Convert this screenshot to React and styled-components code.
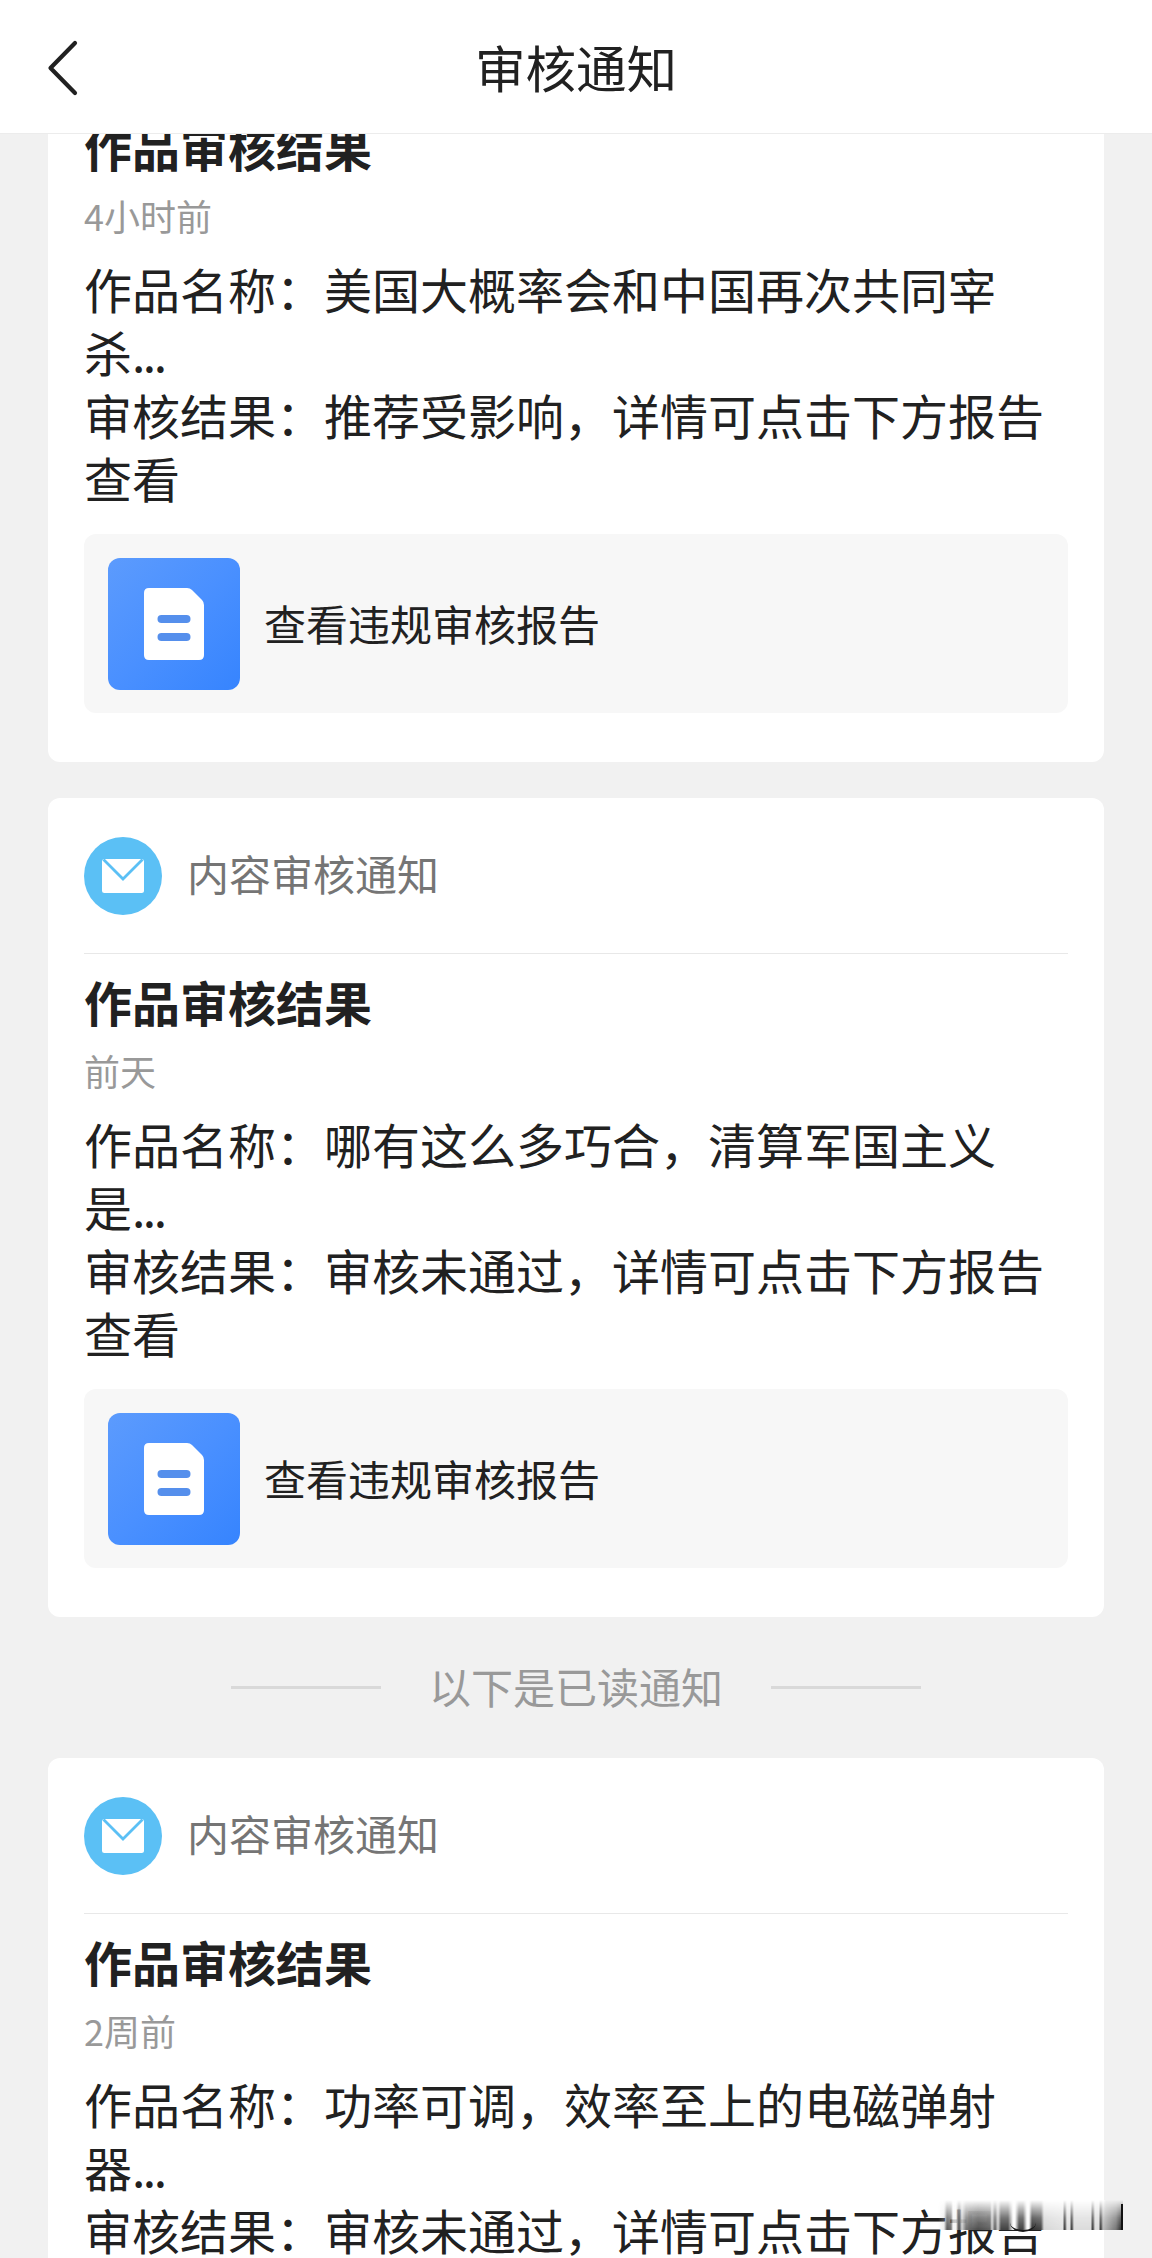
import React from "react";
import styled, { createGlobalStyle } from "styled-components";

const Global = createGlobalStyle`
  *, *::before, *::after { box-sizing: border-box; }
  html, body { margin: 0; padding: 0; background: #f1f1f1; }
  body {
    font-family: "Noto Sans CJK SC", "Noto Sans", sans-serif;
    color: #212121;
    overflow: hidden;
  }
  h1, h2, p { margin: 0; font-weight: 400; }
`;

const Screen = styled.div`
  position: relative;
  display: flex;
  flex-direction: column;
  width: 1152px;
  height: 2258px;
  overflow: hidden;
  background: #f1f1f1;
`;

const NavBar = styled.header`
  display: grid;
  grid-template-columns: 150px 1fr 150px;
  align-items: center;
  flex: none;
  height: 134px;
  background: #fff;
  border-bottom: 1px solid #ececec;
`;

const BackButton = styled.button`
  display: flex;
  padding: 2px 0 0 44px;
  border: 0;
  background: none;
`;

const NavTitle = styled.h1`
  padding-bottom: 1px;
  text-align: center;
  font-size: 50.5px;
  line-height: 64px;
`;

const Feed = styled.main`
  flex: 1;
  min-height: 0;
  overflow: hidden;
  padding: 0 48px;
`;

const FeedList = styled.div`
  display: flex;
  flex-direction: column;
  margin-top: -191px;
`;

const Card = styled.article`
  display: flex;
  flex-direction: column;
  height: 819px;
  margin-bottom: ${(p) => (p.$last ? 0 : 36)}px;
  padding: 0 36px;
  border-radius: 12px;
  background: #fff;
`;

const CardSource = styled.div`
  display: flex;
  align-items: center;
  gap: 25px;
  height: 156px;
  border-bottom: 1px solid #e8e8e8;
  color: #757575;
  font-size: 42px;
  line-height: 60px;
`;

const SourceName = styled.span`
  padding-bottom: 5px;
`;

const CardTitle = styled.h2`
  margin-top: 16px;
  font-size: 48px;
  font-weight: 700;
  line-height: 63px;
`;

const CardTime = styled.p`
  margin-top: 12px;
  color: #999;
  font-size: 36px;
  line-height: 50px;
`;

const CardBody = styled.p`
  margin-top: 17px;
  font-size: 48px;
  line-height: 63px;
  white-space: pre;
`;

const Ellipsis = styled.span`
  letter-spacing: -2.5px;
`;

const ReportLink = styled.div`
  display: flex;
  align-items: center;
  gap: 24px;
  height: 179px;
  margin-top: 25px;
  padding: 0 24px;
  border-radius: 12px;
  background: #f7f7f7;
  font-size: 42px;
  line-height: 60px;
`;

const ReportName = styled.span`
  padding-bottom: 2px;
`;

const ReportBadge = styled.span`
  display: flex;
  align-items: center;
  justify-content: center;
  width: 132px;
  height: 132px;
  border-radius: 12px;
  background: linear-gradient(135deg, #5c9bfd 0%, #4a90ff 50%, #3684fe 100%);
`;

const ReadDivider = styled.div`
  display: flex;
  align-items: center;
  justify-content: center;
  gap: 48px;
  height: 141px;
  margin-top: -36px;
  color: #999;
  font-size: 42px;
  line-height: 60px;
`;

const ReadLabel = styled.span`
  padding-bottom: 3px;
`;

const Rule = styled.i`
  width: 150px;
  height: 3px;
  background: #d9d9d9;
`;

const Smear = styled.div`
  position: absolute;
  left: 938px;
  top: 2200px;
  width: 185px;
  height: 30px;
  background: linear-gradient(90deg, transparent 0, rgba(255, 255, 255, 0.9) 30px, #fff 70px, #fff 165px, transparent 168px);

  &::before {
    content: "";
    position: absolute;
    inset: 0;
    background: linear-gradient(
      90deg,
      rgba(70, 70, 70, 0) 0px,
      rgba(70, 70, 70, 0.1) 6px,
      rgba(50, 50, 50, 0.8) 9px,
      rgba(50, 50, 50, 0.7) 13px,
      rgba(240, 240, 240, 0.7) 15px,
      rgba(240, 240, 240, 0.7) 18px,
      rgba(50, 50, 50, 0.8) 21px,
      rgba(200, 200, 200, 0.8) 24px,
      rgba(80, 80, 80, 0.8) 28px,
      rgba(50, 50, 50, 0.85) 40px,
      rgba(70, 70, 70, 0.85) 52px,
      rgba(200, 200, 200, 0.8) 54px,
      rgba(50, 50, 50, 0.8) 57px,
      rgba(200, 200, 200, 0.8) 60px,
      #444 63px,
      #444 70px,
      #fafafa 75px,
      #fafafa 77px,
      #444 81px,
      #444 85px,
      #fafafa 89px,
      #fafafa 91px,
      #333 94px,
      #444 103px,
      #d8d8d8 106px,
      #e2e2e2 125px,
      #444 126px,
      #444 127px,
      #e0e0e0 129px,
      #e0e0e0 132px,
      #444 133px,
      #444 134px,
      #dcdcdc 136px,
      #dcdcdc 153px,
      #444 154px,
      #444 155px,
      #ddd 157px,
      #ddd 161px,
      #444 162px,
      #444 163px,
      #bbb 165px,
      #777 178px,
      #333 183px,
      #000 184px
    );
    mask-image: linear-gradient(180deg, transparent, rgba(0, 0, 0, 0.35) 8px, rgba(0, 0, 0, 0.75) 18px, #000 29px);
  }

  &::after {
    content: "";
    position: absolute;
    right: 0;
    top: 4px;
    width: 2px;
    height: 26px;
    background: #111;
  }
`;

const SmearArc = styled.i`
  position: absolute;
  left: 1010px;
  top: 2213px;
  width: 26px;
  height: 19px;
  border-bottom: 2px solid #1a1a1a;
  border-radius: 50%;
`;

const BackIcon = () => (
  <svg width="40" height="62" viewBox="0 0 40 62" fill="none" stroke="#212121" strokeWidth="4.2" strokeLinecap="round" strokeLinejoin="round">
    <path d="M31 6 6.500 31 31 56" />
  </svg>
);

const MailIcon = () => (
  <svg width="78" height="78" viewBox="0 0 78 78">
    <circle cx="39" cy="39" r="39" fill="#5bc0f5" />
    <rect x="18" y="22" width="42" height="34" rx="2.500" fill="#fff" />
    <path d="M19.500 22.500 39 42 58.500 22.500" fill="none" stroke="#5bc0f5" strokeWidth="2.800" />
  </svg>
);

const DocIcon = () => (
  <svg width="60" height="72" viewBox="0 0 60 72">
    <path d="M5 0H43Q46 0 48 2L58 12Q60 14 60 17V67Q60 72 55 72H5Q0 72 0 67V5Q0 0 5 0Z" fill="#fff" />
    <rect x="13.500" y="27" width="33" height="8" rx="4" fill="#558fec" />
    <rect x="13.500" y="45" width="33" height="8" rx="4" fill="#558fec" />
  </svg>
);

const Notice = ({ time, work, workTail, result, last }) => (
  <Card $last={last}>
    <CardSource>
      <MailIcon />
      <SourceName>内容审核通知</SourceName>
    </CardSource>
    <CardTitle>作品审核结果</CardTitle>
    <CardTime>{time}</CardTime>
    <CardBody>
      作品名称：{work}
      <br />
      {workTail}
      <Ellipsis>...</Ellipsis>
      <br />
      审核结果：{result}，详情可点击下方报告
      <br />
      查看
    </CardBody>
    <ReportLink>
      <ReportBadge>
        <DocIcon />
      </ReportBadge>
      <ReportName>查看违规审核报告</ReportName>
    </ReportLink>
  </Card>
);

export default function App() {
  return (
    <>
      <Global />
      <Screen>
        <NavBar>
          <BackButton aria-label="返回">
            <BackIcon />
          </BackButton>
          <NavTitle>审核通知</NavTitle>
        </NavBar>
        <Feed>
          <FeedList>
            <Notice time="4小时前" work="美国大概率会和中国再次共同宰" workTail="杀" result="推荐受影响" />
            <Notice time="前天" work="哪有这么多巧合，清算军国主义" workTail="是" result="审核未通过" />
            <ReadDivider>
              <Rule />
              <ReadLabel>以下是已读通知</ReadLabel>
              <Rule />
            </ReadDivider>
            <Notice last time="2周前" work="功率可调，效率至上的电磁弹射" workTail="器" result="审核未通过" />
          </FeedList>
        </Feed>
        <Smear />
        <SmearArc />
      </Screen>
    </>
  );
}
